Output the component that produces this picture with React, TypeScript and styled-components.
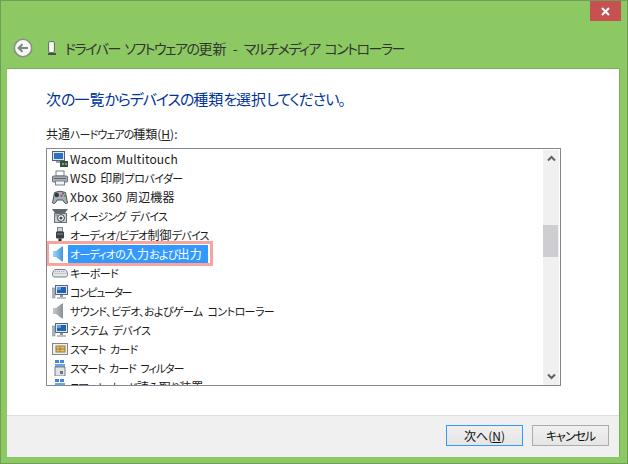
import React, { FunctionComponent } from "react";
import styled, { createGlobalStyle } from "styled-components";

const GlobalStyle = createGlobalStyle`
  html, body {
    margin: 0;
    padding: 0;
    background: #8cc963;
    font-family: "Noto Sans CJK JP", "Noto Sans", sans-serif;
    font-feature-settings: "palt";
  }
`;

const Frame = styled.div`
  box-sizing: border-box;
  width: 628px;
  height: 464px;
  display: flex;
  flex-direction: column;
  background: #8cc963;
  border: 1px solid #6f9e58;
  overflow: hidden;
`;

const TopRow = styled.div`
  display: flex;
  justify-content: flex-end;
  height: 20px;
  padding-right: 6px;
`;

const CloseButton = styled.div`
  width: 31px;
  height: 20px;
  background: #c75050;
  display: flex;
  align-items: center;
  justify-content: center;
`;

const NavRow = styled.div`
  height: 47px;
  display: flex;
  align-items: center;
  padding: 7px 0 0 12px;
  box-sizing: border-box;
`;

const Title = styled.div`
  margin-left: 3px;
  font-size: 14px;
  color: #333;
  white-space: pre;
  word-spacing: 3px;
`;

const Body = styled.div`
  flex: 1;
  margin: 0 7px 6px 6px;
  background: #fff;
  border: 1px solid #7bab5f;
  border-bottom: 0;
  border-left: 0;
  display: flex;
  flex-direction: column;
  min-height: 0;
`;

const Content = styled.div`
  flex: 1;
  padding: 20px 0 0 39px;
  min-height: 0;
`;

const Heading = styled.div`
  font-size: 15px;
  line-height: 20px;
  color: #003399;
`;

const ListLabel = styled.div`
  margin-top: 17px;
  font-size: 12px;
  line-height: 16px;
  color: #222;
  u {
    text-underline-offset: 1px;
  }
`;

const ListBox = styled.div`
  box-sizing: border-box;
  margin-top: 6px;
  width: 515px;
  height: 238px;
  border: 1px solid #828790;
  display: flex;
  background: #fff;
`;

const Rows = styled.div`
  flex: 1;
  overflow: hidden;
  padding: 0 0 0 5px;
`;

const Row = styled.div`
  position: relative;
  height: 19px;
  display: flex;
  align-items: center;
  font-size: 12px;
  color: #1a1a1a;
  white-space: pre;
  letter-spacing: 0.15px;
  word-spacing: 1px;
`;

const IconSlot = styled.div`
  width: 16px;
  height: 16px;
  flex: none;
  svg {
    display: block;
  }
`;

const HeaderIcon = styled(IconSlot)`
  margin-left: 13px;
`;

const RowText = styled.span<{ $selected?: boolean }>`
  height: 18px;
  line-height: 18px;
  padding: 0 ${(p) => (p.$selected ? "6px" : "0")} 0 2px;
  background: ${(p) => (p.$selected ? "#3399ff" : "transparent")};
  color: ${(p) => (p.$selected ? "#fff" : "inherit")};
`;

// Meiryo UI sets kana narrower than kanji, so kana runs get their own size and tracking
const Kana = styled.span<{ $size: number; $spacing: number }>`
  font-size: ${(p) => p.$size}px;
  letter-spacing: ${(p) => p.$spacing}px;
  word-spacing: 3px;
`;

const Jp: FunctionComponent<{ text: string; size: number; spacing: number }> = ({ text, size, spacing }) => (
  <>
    {text.split(/([ぁ-んァ-ヶー、。/][ぁ-んァ-ヶー、。/ ]*)/).map((part, i) =>
      i % 2 === 1 ? (
        <Kana key={i} $size={size} $spacing={spacing}>
          {part}
        </Kana>
      ) : (
        part
      ),
    )}
  </>
);

const Callout = styled.div`
  position: absolute;
  left: -6px;
  top: -3px;
  width: 167px;
  height: 25px;
  box-sizing: border-box;
  border: 3px solid #f7a59d;
`;

const ScrollBar = styled.div`
  width: 16px;
  margin: 1px 1px 0 0;
  background: #f0f0f0;
  display: flex;
  flex-direction: column;
  align-items: center;
`;

const ArrowCell = styled.div`
  width: 16px;
  height: 17px;
  flex: none;
  display: flex;
  align-items: center;
  justify-content: center;
`;

const Track = styled.div`
  flex: 1;
  width: 100%;
  padding-top: 58px;
  box-sizing: border-box;
`;

const Thumb = styled.div`
  width: 15px;
  height: 32px;
  background: #cdcdd2;
`;

const Footer = styled.div`
  height: 42px;
  flex: none;
  box-sizing: border-box;
  background: #f0f0f0;
  border-top: 1px solid #dfdfdf;
  display: flex;
  justify-content: flex-end;
  gap: 9px;
  padding: 9px 10px 0 0;
`;

const Button = styled.div<{ $primary?: boolean }>`
  box-sizing: border-box;
  width: 77px;
  height: 21px;
  display: flex;
  align-items: center;
  justify-content: center;
  font-size: 12px;
  color: #111;
  background: linear-gradient(#f0f0f0, #e5e5e5);
  border: 1px solid ${(p) => (p.$primary ? "#3399ff" : "#acacac")};
  letter-spacing: ${(p) => (p.$primary ? "0" : "-1px")};
  u {
    text-underline-offset: 1px;
  }
`;

const Monitor = () => (
  <svg width="16" height="16" viewBox="0 0 16 16">
    <rect x="3.5" y="1.5" width="12" height="9" fill="#dfe6ee" stroke="#5b6470" />
    <rect x="5" y="3" width="9" height="6" fill="#1f62b8" />
    <rect x="5" y="3" width="4" height="3" fill="#5aa2e8" />
    <rect x="0.5" y="4" width="2.5" height="10" fill="#a9b4bf" stroke="#7d8894" strokeWidth="0.5" />
    <rect x="8" y="11" width="3" height="2" fill="#8b949e" />
    <rect x="5" y="13" width="9" height="2" fill="#b9c1c9" />
  </svg>
);

const Wacom = () => (
  <svg width="16" height="16" viewBox="0 0 16 16">
    <rect x="0.5" y="0.5" width="12" height="9" fill="#dfe6ee" stroke="#56606b" />
    <rect x="2" y="2" width="9" height="6" fill="#2b70c4" />
    <rect x="4" y="10" width="6" height="2" fill="#9aa3ad" />
    <rect x="8" y="10" width="8" height="6" fill="#3e4a44" />
    <rect x="10" y="12" width="2" height="2" fill="#5dbb4a" />
    <rect x="13" y="12" width="2" height="2" fill="#5dbb4a" />
  </svg>
);

const Printer = () => (
  <svg width="16" height="16" viewBox="0 0 16 16">
    <rect x="4" y="1" width="8" height="5" fill="#fff" stroke="#7a828b" />
    <rect x="0.5" y="6" width="15" height="6" rx="1" fill="#a8afb6" stroke="#656d75" />
    <rect x="2" y="8" width="12" height="1" fill="#5c646c" />
    <rect x="3.5" y="11" width="9" height="4" fill="#f4f4f4" stroke="#7a828b" />
  </svg>
);

const Gamepad = () => (
  <svg width="16" height="16" viewBox="0 0 16 16">
    <path d="M0.5 14 L2.5 3.5 Q8 1 13.5 3.5 L15.5 14 Q13 16 11 11 H5 Q3 16 0.5 14 Z" fill="#a9aeb4" stroke="#4c5258" />
    <circle cx="4.8" cy="6" r="2.2" fill="#34393f" />
    <circle cx="11" cy="4.6" r="1.1" fill="#d43c35" />
    <circle cx="12.8" cy="6.8" r="1.1" fill="#3f9c3f" />
    <circle cx="9.4" cy="6.8" r="1.1" fill="#3c6fd0" />
  </svg>
);

const Camera = () => (
  <svg width="16" height="16" viewBox="0 0 16 16">
    <path d="M0 1 H16 L13 5 H3 Z" fill="#5e666e" />
    <rect x="2.5" y="5.5" width="12" height="9" fill="#c8cdd2" stroke="#6b737b" />
    <circle cx="9" cy="10" r="3.4" fill="#fff" stroke="#3a4047" />
    <circle cx="9" cy="10" r="1.6" fill="#39506b" />
    <rect x="3.5" y="6.5" width="3" height="2" fill="#8d959d" />
  </svg>
);

const Plug = () => (
  <svg width="16" height="16" viewBox="0 0 16 16">
    <rect x="5.5" y="0.5" width="5" height="4" fill="#d0d4d8" stroke="#6b7178" strokeWidth="0.8" />
    <rect x="4" y="4.5" width="8" height="7" rx="1" fill="#3a3f45" />
    <rect x="5" y="6.5" width="6" height="1" fill="#8b9198" />
    <rect x="6.5" y="11.5" width="3" height="4" fill="#23272b" />
  </svg>
);

const Speaker: FunctionComponent<{ id: string; from: string; to: string }> = ({ id, from, to }) => (
  <svg width="16" height="16" viewBox="0 0 16 16">
    <defs>
      <linearGradient id={id} x1="0" x2="1" y1="0" y2="0">
        <stop offset="0" stopColor={from} />
        <stop offset="1" stopColor={to} />
      </linearGradient>
    </defs>
    <path d="M1 5 H4 L10 0.5 H11 V15.5 H10 L4 11 H1 Z" fill={`url(#${id})`} />
  </svg>
);

const Keyboard = () => (
  <svg width="16" height="16" viewBox="0 0 16 16">
    <path d="M0.5 9 Q1 4.5 4 4.5 H12 Q15 4.5 15.5 9 V10.5 Q15 12 13 12 H3 Q1 12 0.5 10.5 Z" fill="#e3e5e7" stroke="#777e85" />
    <path d="M3 6.5 H13 M2.5 8.5 H13.5" stroke="#a7adb3" strokeDasharray="1 1" />
  </svg>
);

const SmartCard = () => (
  <svg width="16" height="16" viewBox="0 0 16 16">
    <rect x="0.5" y="2.5" width="15" height="11" fill="#eceef0" stroke="#7f868d" />
    <rect x="4" y="5" width="9" height="6" fill="#e4c06a" stroke="#9a7d35" />
    <path d="M4 8 H13 M8 5 V11" stroke="#9a7d35" />
  </svg>
);

const CardFilter = () => (
  <svg width="16" height="16" viewBox="0 0 16 16">
    <rect x="3" y="0" width="4" height="3" fill="#3f86d6" />
    <rect x="8" y="0" width="4" height="3" fill="#3f86d6" />
    <rect x="3" y="4" width="10" height="3" fill="#6aa6e2" />
    <path d="M3 7 H13 V16 H3 Z" fill="#dfe3e6" stroke="#767d84" />
    <rect x="8" y="11" width="3" height="3" fill="#6b7279" />
  </svg>
);

const Chevron: FunctionComponent<{ down?: boolean }> = ({ down }) => (
  <svg width="9" height="7" viewBox="0 0 9 7">
    <path
      d={down ? "M1 1.5 L4.5 5 L8 1.5" : "M1 5.5 L4.5 2 L8 5.5"}
      fill="none"
      stroke="#606060"
      strokeWidth="2"
    />
  </svg>
);

type Item = { icon: React.ReactNode; text: string; spacing: number; selected?: boolean };

const items: Item[] = [
  { icon: <Wacom />, text: "Wacom Multitouch", spacing: 0 },
  { icon: <Printer />, text: "WSD 印刷プロバイダー", spacing: -0.52 },
  { icon: <Gamepad />, text: "Xbox 360 周辺機器", spacing: 0 },
  { icon: <Camera />, text: "イメージング デバイス", spacing: -0.79 },
  { icon: <Plug />, text: "オーディオ/ビデオ制御デバイス", spacing: -0.72 },
  { icon: <Speaker id="sp-blue" from="#a4d4f5" to="#3f97dd" />, text: "オーディオの入力および出力", spacing: -0.81, selected: true },
  { icon: <Keyboard />, text: "キーボード", spacing: -0.66 },
  { icon: <Monitor />, text: "コンピューター", spacing: -1.43 },
  { icon: <Speaker id="sp-grey" from="#c4c8cc" to="#8a9096" />, text: "サウンド、ビデオ、およびゲーム コントローラー", spacing: -0.58 },
  { icon: <Monitor />, text: "システム デバイス", spacing: -0.57 },
  { icon: <SmartCard />, text: "スマート カード", spacing: -0.82 },
  { icon: <CardFilter />, text: "スマート カード フィルター", spacing: -1.01 },
  { icon: <CardFilter />, text: "スマート カード読み取り装置", spacing: -0.9 },
];

export default function App() {
  return (
    <>
      <GlobalStyle />
      <Frame>
        <TopRow>
          <CloseButton>
            <svg width="9" height="9" viewBox="0 0 9 9">
              <path d="M1 1 L8 8 M8 1 L1 8" stroke="#fff" strokeWidth="2" />
            </svg>
          </CloseButton>
        </TopRow>
        <NavRow>
          <svg width="20" height="20" viewBox="0 0 20 20">
            <circle cx="10" cy="10" r="8.7" fill="#f6f7f6" stroke="#8b9088" strokeWidth="1.6" />
            <path d="M15 10 H6 M9.5 6.2 L5.6 10 L9.5 13.8" fill="none" stroke="#7f8580" strokeWidth="2" />
          </svg>
          <HeaderIcon>
            <svg width="16" height="16" viewBox="0 0 16 16">
              <rect x="2.5" y="1.5" width="6" height="11" rx="1.5" fill="#e8ece4" stroke="#6f756b" />
              <rect x="4.5" y="3" width="2" height="9" fill="#fff" />
              <rect x="2" y="13" width="8" height="2" fill="#4a4f47" />
            </svg>
          </HeaderIcon>
          <Title>
            <Jp text="ドライバー ソフトウェアの更新 - マルチメディア コントローラー" size={14} spacing={-1.5} />
          </Title>
        </NavRow>
        <Body>
          <Content>
            <Heading>
              <Jp text="次の一覧からデバイスの種類を選択してください。" size={15} spacing={-1.08} />
            </Heading>
            <ListLabel>
              <Jp text="共通ハードウェアの種類" size={11} spacing={-0.95} />(<u>H</u>):
            </ListLabel>
            <ListBox>
              <Rows>
                {items.map((item) => (
                  <Row key={item.text}>
                    {item.selected && <Callout />}
                    <IconSlot>{item.icon}</IconSlot>
                    <RowText $selected={item.selected}>
                      <Jp text={item.text} size={11} spacing={item.spacing} />
                    </RowText>
                  </Row>
                ))}
              </Rows>
              <ScrollBar>
                <ArrowCell>
                  <Chevron />
                </ArrowCell>
                <Track>
                  <Thumb />
                </Track>
                <ArrowCell>
                  <Chevron down />
                </ArrowCell>
              </ScrollBar>
            </ListBox>
          </Content>
          <Footer>
            <Button $primary>
              次へ(<u>N</u>)
            </Button>
            <Button>キャンセル</Button>
          </Footer>
        </Body>
      </Frame>
    </>
  );
}
